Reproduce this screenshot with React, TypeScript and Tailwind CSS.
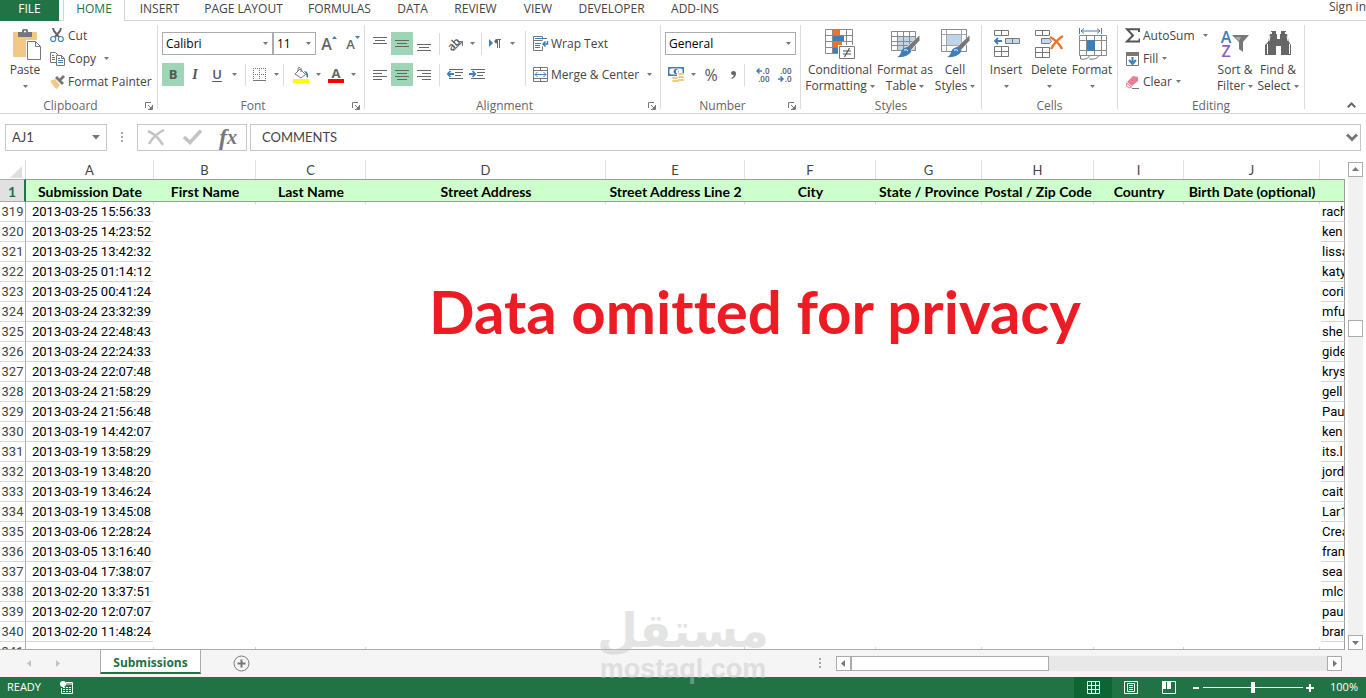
import type { ReactNode } from "react";
import clsx from "clsx";

const tabs = [
  { label: "INSERT", width: "w-[65px]" },
  { label: "PAGE LAYOUT", width: "w-[103px]" },
  { label: "FORMULAS", width: "w-[89px]" },
  { label: "DATA", width: "w-[57px]" },
  { label: "REVIEW", width: "w-[69px]" },
  { label: "VIEW", width: "w-[56px]" },
  { label: "DEVELOPER", width: "w-[91px]" },
  { label: "ADD-INS", width: "w-[76px]" },
];

const columns = [
  { letter: "A", title: "Submission Date", width: "w-[128px]" },
  { letter: "B", title: "First Name", width: "w-[102px]" },
  { letter: "C", title: "Last Name", width: "w-[110px]" },
  { letter: "D", title: "Street Address", width: "w-[240px]" },
  { letter: "E", title: "Street Address Line 2", width: "w-[139px]" },
  { letter: "F", title: "City", width: "w-[131px]" },
  { letter: "G", title: "State / Province", width: "w-[106px]" },
  { letter: "H", title: "Postal / Zip Code", width: "w-[112px]" },
  { letter: "I", title: "Country", width: "w-[90px]" },
  { letter: "J", title: "Birth Date (optional)", width: "w-[136px]" },
];

const rows = [
  ["319", "2013-03-25 15:56:33", "rach"],
  ["320", "2013-03-25 14:23:52", "ken"],
  ["321", "2013-03-25 13:42:32", "lissa"],
  ["322", "2013-03-25 01:14:12", "katy"],
  ["323", "2013-03-25 00:41:24", "cori"],
  ["324", "2013-03-24 23:32:39", "mfu"],
  ["325", "2013-03-24 22:48:43", "she"],
  ["326", "2013-03-24 22:24:33", "gide"],
  ["327", "2013-03-24 22:07:48", "krys"],
  ["328", "2013-03-24 21:58:29", "gell"],
  ["329", "2013-03-24 21:56:48", "Pau"],
  ["330", "2013-03-19 14:42:07", "ken"],
  ["331", "2013-03-19 13:58:29", "its.l"],
  ["332", "2013-03-19 13:48:20", "jord"],
  ["333", "2013-03-19 13:46:24", "cait"],
  ["334", "2013-03-19 13:45:08", "Lar1"],
  ["335", "2013-03-06 12:28:24", "Crea"],
  ["336", "2013-03-05 13:16:40", "fran"],
  ["337", "2013-03-04 17:38:07", "sea"],
  ["338", "2013-02-20 13:37:51", "mlc"],
  ["339", "2013-02-20 12:07:07", "pau"],
  ["340", "2013-02-20 11:48:24", "bran"],
  ["341", "", ""],
];

/* ---------- small shared pieces ---------- */

function Caret({ className }: { className?: string }) {
  return (
    <svg width="5" height="3" viewBox="0 0 5 3" className={clsx("shrink-0 fill-[#777]", className)} aria-hidden>
      <path d="M0 0h5L2.5 3z" />
    </svg>
  );
}

function CaretButton({ label }: { label: string }) {
  return (
    <button type="button" aria-label={label} className="flex h-[23px] w-[13px] shrink-0 items-center justify-center">
      <Caret />
    </button>
  );
}

function Divider({ className }: { className?: string }) {
  return <span className={clsx("w-px shrink-0 bg-[#dcdcdc]", className)} />;
}

function Group({
  title,
  width,
  launcher,
  children,
}: {
  title: string;
  width: string;
  launcher?: boolean;
  children: ReactNode;
}) {
  return (
    <section aria-label={title} className={clsx("flex shrink-0", width)}>
      <div className="flex min-w-0 flex-1 flex-col">
        <div className="flex flex-1">{children}</div>
        <div className="flex h-[15px] items-center">
          <span className="flex-1 text-center leading-[15px] text-[#666]">{title}</span>
          {launcher && (
            <button type="button" aria-label={`${title} settings`} className="flex w-4 items-center justify-center">
              <svg width="8" height="8" viewBox="0 0 8 8" fill="none" stroke="#777" aria-hidden>
                <path d="M.5 6V.5H6M3 3l3 3M7.5 3v4.5H3" />
                <path d="M7 4v3H4z" fill="#777" stroke="none" />
              </svg>
            </button>
          )}
        </div>
      </div>
      <Divider className="my-1" />
    </section>
  );
}

function SmallButton({ icon, label, caret }: { icon: ReactNode; label: string; caret?: string }) {
  return (
    <button type="button" className="flex h-[23px] items-center whitespace-nowrap">
      <span className="flex w-[18px] shrink-0 items-center justify-start">{icon}</span>
      {label}
      {caret && <Caret className={caret} />}
    </button>
  );
}

function BigButton({
  icon,
  lines,
  width,
}: {
  icon: ReactNode;
  lines: string[];
  width: string;
}) {
  return (
    <button type="button" className={clsx("flex shrink-0 flex-col items-center pt-1", width)}>
      <span className="flex h-[37px] items-center">{icon}</span>
      <span className="leading-4 whitespace-nowrap">{lines[0]}</span>
      <span className="flex h-4 items-center gap-[3px] leading-4 whitespace-nowrap">
        {lines[1]}
        <Caret />
      </span>
    </button>
  );
}

function IconButton({
  label,
  active,
  width = "w-[22px]",
  children,
}: {
  label: string;
  active?: boolean;
  width?: string;
  children: ReactNode;
}) {
  return (
    <button
      type="button"
      aria-label={label}
      aria-pressed={active}
      className={clsx("flex h-[23px] shrink-0 items-center justify-center", width, active && "bg-[#9fd5b7]")}
    >
      {children}
    </button>
  );
}

function Picker({ label, value, width }: { label: string; value: string; width: string }) {
  return (
    <div className={clsx("flex h-[23px] items-center border border-[#ababab] bg-white pr-1", width)}>
      <select aria-label={label} className="h-full min-w-0 flex-1 appearance-none pl-[3px] text-black outline-none">
        <option>{value}</option>
      </select>
      <Caret />
    </div>
  );
}

function Lines({ d }: { d: string }) {
  return (
    <svg width="14" height="14" viewBox="0 0 14 14" fill="none" stroke="#666" aria-hidden>
      <path d={d} />
    </svg>
  );
}

/* ---------- ribbon icons ---------- */

function PasteIcon() {
  return (
    <svg width="28" height="31" viewBox="0 0 28 31" aria-hidden>
      <path d="M0 3h24v25H0z" fill="#f0c987" />
      <path d="M5 3h4V1.500q0-1.500 1.500-1.500h3Q15 0 15 1.500V3h4v5H5z" fill="#777" />
      <circle cx="12" cy="2.500" r="1" fill="#fff" />
      <path d="M13 11h10l5 5v15H13z" fill="#fff" />
      <path d="M14.500 12.500h8l5 5v13h-13zM22.500 12.500v5h5" fill="#fff" stroke="#777" />
    </svg>
  );
}

function CutIcon() {
  return (
    <svg width="14" height="15" viewBox="0 0 14 15" fill="none" aria-hidden>
      <path d="M3 0l1 3 5 6M11 0l-1 3-5 6" stroke="#666" strokeWidth="2" />
      <circle cx="3.200" cy="11" r="2.500" stroke="#3f7fb9" strokeWidth="1.200" />
      <circle cx="10.800" cy="11" r="2.500" stroke="#3f7fb9" strokeWidth="1.200" />
    </svg>
  );
}

function CopyIcon() {
  return (
    <svg width="15" height="14" viewBox="0 0 15 14" fill="none" aria-hidden>
      <path d="M.5.5h5l2 2v8h-7z" stroke="#777" fill="#fff" />
      <path d="M2 3.500h2M2 5.500h3M2 7.500h3" stroke="#3f7fb9" />
      <path d="M6.500 3.500h5l3 3v7h-8z" stroke="#777" fill="#fff" />
      <path d="M11.500 3.500v3h3" stroke="#777" />
      <path d="M8 6.500h2M8 8.500h5M8 10.500h5" stroke="#3f7fb9" />
    </svg>
  );
}

function PainterIcon() {
  return (
    <svg width="16" height="14" viewBox="0 0 16 14" aria-hidden>
      <path d="M0 6l5-2 5 6-3 4-2-1z" fill="#f0c987" />
      <path d="M5 3l2-2 7 7-2 2z" fill="#777" />
      <path d="M9 4l4-4 2 2-4 4z" fill="#777" />
    </svg>
  );
}

function BordersIcon() {
  return (
    <svg width="13" height="13" viewBox="0 0 13 13" fill="none" stroke="#777" aria-hidden>
      <path d="M0 .5h13M0 6.500h13M.5 0v12M6.500 0v12M12.500 0v12" strokeDasharray="1 1" />
      <path d="M0 12.500h13" />
    </svg>
  );
}

function FillColorIcon() {
  return (
    <svg width="16" height="16" viewBox="0 0 16 16" fill="none" aria-hidden>
      <path d="M2 7l5-5 5.500 5.500L8 11z" fill="#fff" stroke="#777" />
      <path d="M5 4V2q0-2 2-1.500T8 5" stroke="#777" />
      <path d="M11 4q5 0 4 7-2-1-2-4z" fill="#3f7fb9" />
      <path d="M0 12h16v4H0z" fill="#ff0" />
    </svg>
  );
}

function FontColorIcon() {
  return (
    <span className="flex w-4 flex-col items-center border-b-4 border-[#ff0000] text-[13px] leading-3 font-bold text-[#666]">
      A
    </span>
  );
}

function OrientationIcon() {
  return (
    <span className="flex items-center">
      <span className="-rotate-45 text-[11px] leading-3 font-semibold text-[#555]">ab</span>
      <svg width="10" height="14" viewBox="0 0 10 14" fill="none" className="-ml-2" aria-hidden>
        <path d="M0 14L9 5M4.500 4.500H9.500V9" stroke="#777" strokeWidth="1.200" />
      </svg>
    </span>
  );
}

function DirectionIcon() {
  return (
    <svg width="13" height="11" viewBox="0 0 13 11" aria-hidden>
      <path d="M0 1l4 4-4 4z" fill="#3f7fb9" />
      <path d="M7.500 1.500H12M8.500 1v9M10.500 1v9" stroke="#666" fill="none" />
      <path d="M8.500 1Q5.500 1 5.500 3.200T8.500 5.500z" fill="#666" />
    </svg>
  );
}

function IndentIcon({ out }: { out?: boolean }) {
  return (
    <svg width="16" height="11" viewBox="0 0 16 11" fill="none" aria-hidden>
      <path d="M2 .5h14M8 3.500h8M8 6.500h6M2 9.500h14" stroke="#666" />
      {out ? (
        <path d="M7 5H1M3.500 2L.7 5l2.800 3" stroke="#3f7fb9" strokeWidth="1.800" />
      ) : (
        <path d="M0 5h6M3.500 2l2.800 3-2.800 3" stroke="#3f7fb9" strokeWidth="1.800" />
      )}
    </svg>
  );
}

function WrapIcon() {
  return (
    <svg width="16" height="16" viewBox="0 0 16 16" fill="none" aria-hidden>
      <path d="M9.500 3.500V.5h-9v14h9v-4M.5 4.500h9" stroke="#777" />
      <path d="M2 2.500h12M2 7.500h6M2 9.500h5M2 11.500h5" stroke="#3f7fb9" />
      <path d="M14.500 5v3h-4M12.500 5.500L10 8l2.500 2.500" stroke="#3f7fb9" strokeWidth="1.500" />
    </svg>
  );
}

function MergeIcon() {
  return (
    <svg width="15" height="15" viewBox="0 0 15 15" fill="none" aria-hidden>
      <path d="M.5.5h14v14H.5zM.5 3.500h14M.5 11.500h14M7.500.5v3M7.500 11.500v3" stroke="#777" />
      <path d="M2 7.500h11M4.500 5L2 7.500 4.500 10M10.500 5L13 7.500 10.500 10" stroke="#3f7fb9" />
    </svg>
  );
}

function MoneyIcon() {
  return (
    <svg width="17" height="16" viewBox="0 0 17 16" aria-hidden>
      <path d="M0 0h16v9H0z" fill="#3f7fb9" />
      <path d="M1.500 2.500v4l1.500 1h10l1.500-1v-4l-1.500-1H3z" fill="#fff" />
      <circle cx="8" cy="4.500" r="2.500" fill="#3f7fb9" />
      <path d="M8 3h2v3H8z" fill="#fff" />
      <path d="M9 6h7v8H9zM4 10h7v6H4z" fill="#fff" />
      <g fill="#f0c987">
        <rect x="10" y="6" width="6" height="2" rx="1" />
        <rect x="10" y="9" width="6" height="2" rx="1" />
        <rect x="10" y="12" width="6" height="2" rx="1" />
        <rect x="4" y="10" width="6" height="2" rx="1" />
        <rect x="4" y="13" width="7" height="2" rx="1" />
      </g>
    </svg>
  );
}

function DecimalIcon({ more }: { more?: boolean }) {
  return (
    <span className="flex w-[15px] flex-col items-end text-[8px] leading-[8px] font-semibold text-[#555]">
      <span className="flex items-center">
        {more && (
          <svg width="7" height="6" viewBox="0 0 7 6" fill="none" stroke="#3f7fb9" strokeWidth="1.500" aria-hidden>
            <path d="M6 3H1M3.500.5L1 3l2.500 2.500" />
          </svg>
        )}
        {more ? ".0" : ".00"}
      </span>
      <span className="flex items-center">
        {!more && (
          <svg width="7" height="6" viewBox="0 0 7 6" fill="none" stroke="#3f7fb9" strokeWidth="1.500" aria-hidden>
            <path d="M0 3h5M2.500.5L5 3 2.500 5.500" />
          </svg>
        )}
        {more ? ".00" : ".0"}
      </span>
    </span>
  );
}

function ConditionalIcon() {
  return (
    <svg width="30" height="30" viewBox="0 0 30 30" fill="none" aria-hidden>
      <path d="M.5.5h27v24H.5zM.5 6.500h27M.5 12.500h27M.5 18.500h27M7.500.5v24M14.500.5v24M21.500.5v24" stroke="#8a8a8a" fill="#fff" />
      <path d="M8 1h6v5H8zM8 13h9v5H8z" fill="#ee7326" />
      <path d="M8 7h11v5H8zM8 19h5v5H8z" fill="#3f7fb9" />
      <path d="M13 16h17v14H13z" fill="#fff" />
      <path d="M14.500 17.500h15v12h-15z" stroke="#777" fill="#fff" />
      <path d="M18 22h8M18 25h8M24.500 19l-5 9" stroke="#555" strokeWidth="1.200" />
    </svg>
  );
}

function Brush() {
  return (
    <>
      <path d="M30 6v6L19 24l-5-4z" fill="#fff" />
      <path d="M29.500 6.500v5L20 22l-4-3z" fill="#777" />
      <path d="M17 18q4 1 4 5-4 6-14 5 3-1 4-5t6-5z" fill="#3f7fb9" />
      <path d="M14 21q3-1 4 1" stroke="#fff" />
    </>
  );
}

function FormatTableIcon() {
  return (
    <svg width="30" height="30" viewBox="0 0 30 30" fill="none" aria-hidden>
      <path d="M1.500 2.500h24v19h-24z" stroke="#8a8a8a" fill="#fff" />
      <path d="M8 8h17v13H8z" fill="#bfd4e8" />
      <path d="M1.500 7.500h24M1.500 12.500h24M1.500 16.500h24M7.500 2.500v19M13.500 2.500v19M19.500 2.500v19" stroke="#8a8a8a" />
      <Brush />
    </svg>
  );
}

function CellStylesIcon() {
  return (
    <svg width="30" height="30" viewBox="0 0 30 30" fill="none" aria-hidden>
      <path d="M1.500.5h25v22h-25z" stroke="#8a8a8a" fill="#fff" />
      <path d="M1.500 5.500h25M1.500 16.500h25M6.500.5v22M21.500.5v22" stroke="#a5a5a5" />
      <path d="M7 6h14v10H7z" fill="#bfd4e8" />
      <Brush />
    </svg>
  );
}

function InsertIcon() {
  return (
    <svg width="27" height="30" viewBox="0 0 27 30" fill="none" stroke="#777" aria-hidden>
      <path d="M1.500 1.500h14v5h-14zM8.500 1.500v5M1.500 17.500h14v10h-14zM8.500 17.500v10M1.500 22.500h14" />
      <path d="M12.500 9.500h14v5h-14zM19.500 9.500v5" fill="#c5d9ec" />
      <path d="M9 12H2M5 9l-3 3 3 3" stroke="#3f7fb9" strokeWidth="1.800" />
    </svg>
  );
}

function DeleteIcon() {
  return (
    <svg width="30" height="30" viewBox="0 0 30 30" fill="none" stroke="#777" aria-hidden>
      <path d="M1.500 1.500h14v5h-14zM8.500 1.500v5M1.500 18.500h14v10h-14zM8.500 18.500v10M1.500 23.500h14" />
      <path d="M7.500 9.500h8l2 3-2 2h-8z" fill="#c5d9ec" />
      <path d="M16 8q8 4 12 12M29 7q-7 4-12 13" stroke="#ee7326" strokeWidth="2.500" />
    </svg>
  );
}

function FormatIcon() {
  return (
    <svg width="29" height="32" viewBox="0 0 29 32" fill="none" stroke="#8a8a8a" aria-hidden>
      <path d="M1.500 0v6M23.500 0v6M3 3h19M6 .5L3 3l3 2.500M19 .5L22 3l-3 2.500" stroke="#3f7fb9" />
      <path d="M1.500 7.500h27v20h-27zM1.500 12.500h27M1.500 22.500h27M8.500 7.500v20M16.500 7.500v20M23.500 7.500v20" fill="#fff" />
      <path d="M9 12h8v11H9z" fill="#3f7fb9" stroke="none" />
      <path d="M2.500 28v3q7 1 9-3M11.500 31q7 1 9-3" stroke="#777" />
    </svg>
  );
}

function SigmaIcon() {
  return (
    <svg width="15" height="15" viewBox="0 0 15 15" fill="none" aria-hidden>
      <path d="M14 4V1.200H2L8 7.500 2 13.500h12.500v-3" stroke="#555" strokeWidth="2" />
    </svg>
  );
}

function FillIcon() {
  return (
    <svg width="15" height="16" viewBox="0 0 15 16" fill="none" aria-hidden>
      <path d="M1.500 1.500h12v13h-12z" stroke="#777" fill="#fff" />
      <path d="M1 1h13v4H1z" fill="#777" />
      <path d="M7.500 6v7M4 9l3.500 4L11 9" stroke="#3f7fb9" strokeWidth="2" />
    </svg>
  );
}

function EraserIcon() {
  return (
    <svg width="15" height="14" viewBox="0 0 15 14" fill="none" aria-hidden>
      <path d="M8 1l5 1v4l-6 5-5-4z" fill="#ec7d95" />
      <path d="M1.500 8l5 4-2 1-3-2z" fill="#fff" stroke="#ec7d95" />
      <path d="M7 13.500h7" stroke="#777" />
    </svg>
  );
}

function SortIcon() {
  return (
    <span className="flex items-center gap-px">
      <span className="flex flex-col text-base leading-[14px] font-semibold">
        <span className="text-[#3f7fb9]">A</span>
        <span className="text-[#8b5fb5]">Z</span>
      </span>
      <svg width="17" height="17" viewBox="0 0 17 17" aria-hidden>
        <path d="M0 0h17l-6 7v10l-4-3V7z" fill="#777" />
        <path d="M3 2h6L7 6z" fill="#aaa" />
      </svg>
    </span>
  );
}

function FindIcon() {
  return (
    <svg width="27" height="25" viewBox="0 0 27 25" fill="#666" aria-hidden>
      <path d="M6 0h5v3h1v5h3V3h1V0h5v3h1l2 8 2 3v10H16v-9h-5v9H0V14l3-3 2-8h1z" />
      <path d="M6.500 3v-2M20.500 3v-2M2.500 13v10M24.500 13v10M5 5L4 10M22 5l1 5" stroke="#fff" />
    </svg>
  );
}

/* ---------- page sections ---------- */

function TabStrip() {
  return (
    <nav aria-label="Ribbon tabs" className="flex h-[21px] shrink-0 items-stretch leading-[17px]">
      <button type="button" className="w-[59px] bg-[#217346] pb-1 text-white">
        FILE
      </button>
      <span className="w-1 border-b border-[#d4d4d4]" />
      <button type="button" className="w-[62px] border-x border-[#d4d4d4] pb-1 text-[#217346]">
        HOME
      </button>
      <div className="flex flex-1 border-b border-[#d4d4d4] pl-0.5">
        {tabs.map(({ label, width }) => (
          <button key={label} type="button" className={clsx("shrink-0 pb-[3px] whitespace-nowrap", width)}>
            {label}
          </button>
        ))}
        <a href="#sign-in" className="ml-auto pb-[7px] leading-[13px] whitespace-nowrap">
          Sign in
        </a>
      </div>
    </nav>
  );
}

function Ribbon() {
  return (
    <div className="flex h-[93px] shrink-0 border-b border-[#d4d4d4]">
      <Group title="Clipboard" width="w-[158px]" launcher>
        <button type="button" className="flex w-[50px] shrink-0 flex-col items-center pt-2">
          <span className="flex h-[33px] items-start pl-1">
            <PasteIcon />
          </span>
          <span className="leading-4">Paste</span>
          <span className="flex h-4 items-center">
            <Caret />
          </span>
        </button>
        <div className="flex flex-col items-start pt-[3px]">
          <SmallButton icon={<CutIcon />} label="Cut" />
          <SmallButton icon={<CopyIcon />} label="Copy" caret="ml-2" />
          <SmallButton icon={<PainterIcon />} label="Format Painter" />
        </div>
      </Group>

      <Group title="Font" width="w-[207px]" launcher>
        <div className="flex flex-col gap-2 pt-[11px] pl-1">
          <div className="flex items-center">
            <Picker label="Font family" value="Calibri" width="w-[111px]" />
            <Picker label="Font size" value="11" width="w-[43px]" />
            <IconButton label="Increase font size" width="w-[26px]">
              <span className="text-base leading-4 font-semibold text-[#666]">A</span>
              <svg width="5" height="15" viewBox="0 0 5 15" fill="#3f7fb9" aria-hidden>
                <path d="M0 3h5L2.500 0z" />
              </svg>
            </IconButton>
            <IconButton label="Decrease font size" width="w-[22px]">
              <span className="text-[13px] leading-4 font-semibold text-[#666]">A</span>
              <svg width="5" height="15" viewBox="0 0 5 15" fill="#3f7fb9" aria-hidden>
                <path d="M0 0h5L2.500 3z" />
              </svg>
            </IconButton>
          </div>
          <div className="flex items-center">
            <IconButton label="Bold" active>
              <b className="text-[13px] text-[#555]">B</b>
            </IconButton>
            <IconButton label="Italic">
              <i className="font-['Liberation_Serif'] text-sm font-bold text-[#555]">I</i>
            </IconButton>
            <IconButton label="Underline">
              <u className="text-[13px] font-semibold text-[#555] underline-offset-2">U</u>
            </IconButton>
            <CaretButton label="Underline style" />
            <Divider className="mr-0.5 ml-1 h-[22px]" />
            <IconButton label="Borders">
              <BordersIcon />
            </IconButton>
            <CaretButton label="Border style" />
            <Divider className="mr-1.5 h-[22px]" />
            <IconButton label="Fill color">
              <FillColorIcon />
            </IconButton>
            <CaretButton label="Fill color list" />
            <IconButton label="Font color">
              <FontColorIcon />
            </IconButton>
            <CaretButton label="Font color list" />
          </div>
        </div>
      </Group>

      <Group title="Alignment" width="w-[296px]" launcher>
        <div className="flex flex-col gap-2 pt-[11px] pl-1">
          <div className="flex items-center">
            <IconButton label="Top align">
              <Lines d="M0 .5h14M2 3.500h10M0 6.500h14" />
            </IconButton>
            <IconButton label="Middle align" active>
              <Lines d="M0 3.500h14M2 6.500h10M0 9.500h14" />
            </IconButton>
            <IconButton label="Bottom align">
              <Lines d="M0 7.500h14M2 10.500h10M0 13.500h14" />
            </IconButton>
            <Divider className="mx-1 h-[22px]" />
            <IconButton label="Orientation">
              <OrientationIcon />
            </IconButton>
            <CaretButton label="Orientation list" />
            <Divider className="mx-0.5 h-[22px]" />
            <IconButton label="Text direction">
              <DirectionIcon />
            </IconButton>
            <CaretButton label="Text direction list" />
          </div>
          <div className="flex items-center">
            <IconButton label="Align left">
              <Lines d="M0 2.500h14M0 5.500h9M0 8.500h14M0 11.500h9" />
            </IconButton>
            <IconButton label="Align center" active>
              <Lines d="M0 2.500h14M2 5.500h10M0 8.500h14M2 11.500h10" />
            </IconButton>
            <IconButton label="Align right">
              <Lines d="M0 2.500h14M5 5.500h9M0 8.500h14M5 11.500h9" />
            </IconButton>
            <Divider className="mx-1 h-[22px]" />
            <IconButton label="Decrease indent">
              <IndentIcon out />
            </IconButton>
            <IconButton label="Increase indent">
              <IndentIcon />
            </IconButton>
          </div>
        </div>
        <Divider className="mt-[10px] mr-[7px] ml-1.5 h-[55px]" />
        <div className="flex flex-col items-start gap-2 pt-[11px]">
          <SmallButton icon={<WrapIcon />} label="Wrap Text" />
          <SmallButton icon={<MergeIcon />} label="Merge & Center" caret="ml-2" />
        </div>
      </Group>

      <Group title="Number" width="w-[140px]" launcher>
        <div className="flex flex-col gap-2 pt-[11px] pl-1">
          <Picker label="Number format" value="General" width="w-[131px]" />
          <div className="flex items-center">
            <IconButton label="Accounting format">
              <MoneyIcon />
            </IconButton>
            <CaretButton label="Accounting format list" />
            <IconButton label="Percent style">
              <span className="text-base text-[#555]">%</span>
            </IconButton>
            <IconButton label="Comma style">
              <svg width="5" height="8" viewBox="0 0 5 8" fill="#666" aria-hidden>
                <path d="M0 2q0-2 2.500-2T5 2.500Q5 6 1 8L.5 7Q3 5.500 2.800 4 0 4.500 0 2z" />
              </svg>
            </IconButton>
            <Divider className="mr-1.5 h-[22px]" />
            <IconButton label="Increase decimal">
              <DecimalIcon more />
            </IconButton>
            <IconButton label="Decrease decimal">
              <DecimalIcon />
            </IconButton>
          </div>
        </div>
      </Group>

      <Group title="Styles" width="w-[181px]">
        <BigButton icon={<ConditionalIcon />} lines={["Conditional", "Formatting"]} width="w-[78px]" />
        <BigButton icon={<FormatTableIcon />} lines={["Format as", "Table"]} width="w-[52px]" />
        <BigButton icon={<CellStylesIcon />} lines={["Cell", "Styles"]} width="w-[48px]" />
      </Group>

      <Group title="Cells" width="w-[136px]">
        <BigButton icon={<InsertIcon />} lines={["Insert", ""]} width="w-[48px]" />
        <BigButton icon={<DeleteIcon />} lines={["Delete", ""]} width="w-[38px]" />
        <BigButton icon={<FormatIcon />} lines={["Format", ""]} width="w-[48px]" />
      </Group>

      <Group title="Editing" width="w-[187px]">
        <div className="flex w-[94px] shrink-0 flex-col items-start pt-[3px] pl-[7px]">
          <SmallButton icon={<SigmaIcon />} label="AutoSum" caret="ml-2" />
          <SmallButton icon={<FillIcon />} label="Fill" caret="ml-1" />
          <SmallButton icon={<EraserIcon />} label="Clear" caret="ml-1" />
        </div>
        <BigButton icon={<SortIcon />} lines={["Sort &", "Filter"]} width="w-[46px]" />
        <BigButton icon={<FindIcon />} lines={["Find &", "Select"]} width="w-[40px]" />
      </Group>

      <button type="button" aria-label="Collapse the ribbon" className="mt-auto mr-[10px] ml-auto pb-[5px]">
        <svg width="9" height="6" viewBox="0 0 9 6" fill="none" stroke="#666" strokeWidth="2" aria-hidden>
          <path d="M.7 5.300L4.500 1.500l3.800 3.800" />
        </svg>
      </button>
    </div>
  );
}

function Dots() {
  return (
    <svg width="2" height="11" viewBox="0 0 2 11" fill="#a6a6a6" aria-hidden>
      <path d="M0 0h2v2H0zM0 4h2v2H0zM0 8h2v2H0z" />
    </svg>
  );
}

function FormulaBar() {
  return (
    <div className="flex h-[46px] shrink-0 items-center px-[5px] font-['Lato',sans-serif] text-[13px]">
      <div className="flex h-[27px] w-[102px] items-center border border-[#c6c6c6] pr-[6px]">
        <input aria-label="Name box" defaultValue="AJ1" className="min-w-0 flex-1 pt-0.5 pl-[6px] outline-none" />
        <svg width="8" height="5" viewBox="0 0 8 5" fill="#777" aria-hidden>
          <path d="M0 0h8L4 4.500z" />
        </svg>
      </div>
      <div className="flex w-[30px] justify-center">
        <Dots />
      </div>
      <div className="flex h-[27px] w-[110px] items-center border border-[#c6c6c6]">
        <button type="button" aria-label="Cancel" className="flex w-9 justify-center">
          <svg width="18" height="17" viewBox="0 0 18 17" fill="none" stroke="#c3c3c3" strokeWidth="2.500" aria-hidden>
            <path d="M1 2q9 4 15 14M17 1Q7 6 2 15" />
          </svg>
        </button>
        <button type="button" aria-label="Enter" className="flex w-9 justify-center">
          <svg width="19" height="16" viewBox="0 0 19 16" fill="none" stroke="#c3c3c3" strokeWidth="3.500" aria-hidden>
            <path d="M1 8l6 5.500L18 1.500" />
          </svg>
        </button>
        <button
          type="button"
          aria-label="Insert function"
          className="flex w-9 items-center justify-center font-['Liberation_Serif',serif] leading-6 font-bold text-[#777] italic"
        >
          <span className="text-2xl leading-6">f</span>
          <span className="text-xl leading-6">x</span>
        </button>
      </div>
      <div className="ml-[3px] flex h-[27px] flex-1 items-center border border-[#c6c6c6] pr-[2px]">
        <input aria-label="Formula" defaultValue="COMMENTS" className="min-w-0 flex-1 pt-0.5 pl-[11px] outline-none" />
        <svg width="12" height="9" viewBox="0 0 12 9" fill="none" stroke="#777" strokeWidth="3" aria-hidden>
          <path d="M1 1.500l5 5 5-5" />
        </svg>
      </div>
    </div>
  );
}

function Sheet() {
  return (
    <div className="relative min-w-0 flex-1 overflow-hidden border-b border-[#ababab]">
      <table className="w-full table-fixed border-separate border-spacing-0 font-['Lato',sans-serif] text-[13px] text-black">
        <colgroup>
          <col className="w-[26px]" />
          {columns.map(({ letter, width }) => (
            <col key={letter} className={width} />
          ))}
          <col />
        </colgroup>
        <thead>
          <tr className="h-[19px] text-[#444]">
            <th aria-label="Select all" className="border-r border-[#d9d9d9] p-0">
              <svg width="12" height="12" viewBox="0 0 12 12" fill="#dfdfdf" className="mt-1 ml-[10px]" aria-hidden>
                <path d="M12 0v12H0z" />
              </svg>
            </th>
            {columns.map(({ letter }) => (
              <th key={letter} className="border-r border-[#e1e1e1] p-0 leading-[18px] font-normal">
                {letter}
              </th>
            ))}
            <th className="p-0" />
          </tr>
          <tr className="h-[23px] text-sm leading-[19px]">
            <th className="border-y border-r-2 border-y-[#ababab] border-r-[#217346] bg-[#e1e1e1] p-0 pt-0.5 text-[#217346]">
              1
            </th>
            {columns.map(({ letter, title }) => (
              <th key={letter} className="border-y border-[#9b9b9b] bg-[#ccffcc] p-0 pt-0.5 whitespace-nowrap">
                {title}
              </th>
            ))}
            <th className="border-y border-r border-[#9b9b9b] bg-[#ccffcc] p-0" />
          </tr>
        </thead>
        <tbody className="font-['Roboto',sans-serif] leading-[18px]">
          {rows.map(([n, date, email]) => (
            <tr key={n} className="h-5">
              <th className="border-r border-b border-r-[#ababab] border-b-[#d9d9d9] p-0 pt-px font-normal text-[#444]">{n}</th>
              {columns.map(({ letter }) => (
                <td key={letter} className="border-r border-b border-[#d4d4d4] p-0 pt-px pr-0.5 text-right whitespace-nowrap">
                  {letter === "A" && date}
                </td>
              ))}
              <td className="overflow-hidden border-r border-b border-r-[#9b9b9b] border-b-[#d4d4d4] p-0 pt-px pl-[2px]">
                {email}
              </td>
            </tr>
          ))}
        </tbody>
      </table>

      {/* block covering the private columns */}
      <div className="absolute top-11 right-6 bottom-[2px] left-[153px] flex justify-center bg-white">
        <p className="mt-[67px] mr-[-36px] h-[80px] font-['Lato',sans-serif] text-[60px] leading-[80px] font-bold whitespace-nowrap text-[#ed1c24] [font-variant-ligatures:none]">
          Data omitted for privacy
        </p>
      </div>
    </div>
  );
}

function ScrollButton({ label, d }: { label: string; d: string }) {
  return (
    <button
      type="button"
      aria-label={label}
      className="flex h-[15px] w-[15px] shrink-0 items-center justify-center border border-[#ababab] bg-white"
    >
      <svg width="7" height="7" viewBox="0 0 7 7" fill="#777" aria-hidden>
        <path d={d} />
      </svg>
    </button>
  );
}

function VerticalScroll() {
  return (
    <div className="flex w-[21px] shrink-0 flex-col pt-[2px] pl-[3px]">
      <ScrollButton label="Scroll up" d="M0 5h7L3.500 1z" />
      <div className="flex w-[15px] flex-1 flex-col bg-[#f1f1f1]">
        <span className="flex-[143]" />
        <span className="h-[17px] border border-[#ababab] bg-white" />
        <span className="flex-[297]" />
      </div>
      <ScrollButton label="Scroll down" d="M0 2h7L3.500 6z" />
    </div>
  );
}

function SheetTabs() {
  return (
    <div className="flex h-[27px] shrink-0 bg-[#f5f5f5]">
      <div className="flex w-[100px] items-center gap-[25px] pl-[27px]">
        <button type="button" aria-label="Previous sheet">
          <svg width="4" height="7" viewBox="0 0 4 7" fill="#c3c3c3" aria-hidden>
            <path d="M4 0v7L0 3.500z" />
          </svg>
        </button>
        <button type="button" aria-label="Next sheet">
          <svg width="4" height="7" viewBox="0 0 4 7" fill="#c3c3c3" aria-hidden>
            <path d="M0 0v7l4-3.500z" />
          </svg>
        </button>
      </div>
      <button
        type="button"
        className="mb-[3px] w-[101px] border-x border-b-2 border-x-[#ababab] border-b-[#217346] bg-white pt-[3px] font-['Open_Sans',sans-serif] text-xs font-bold text-[#217346]"
      >
        Submissions
      </button>
      <button type="button" aria-label="New sheet" className="ml-8">
        <svg width="17" height="17" viewBox="0 0 17 17" fill="none" stroke="#777" aria-hidden>
          <circle cx="8.500" cy="8.500" r="7.500" />
          <path d="M8.500 4.500v8M4.500 8.500h8" strokeWidth="2" />
        </svg>
      </button>
      <div className="ml-auto flex w-[547px] items-center">
        <div className="mr-[15px]">
          <Dots />
        </div>
        <ScrollButton label="Scroll left" d="M5 0v7L1 3.500z" />
        <div className="flex h-[15px] flex-1 bg-[#e8e8e8]">
          <span className="w-[198px] border border-[#ababab] bg-white" />
        </div>
        <ScrollButton label="Scroll right" d="M2 0v7l4-3.500z" />
        <span className="w-6" />
      </div>
    </div>
  );
}

function StatusBar() {
  return (
    <footer className="flex h-[21px] shrink-0 items-center bg-[#217346] text-[11px] text-white">
      <span className="w-[60px] pl-[7px]">READY</span>
      <button type="button" aria-label="Record macro">
        <svg width="13" height="13" viewBox="0 0 13 13" fill="none" stroke="#fff" aria-hidden>
          <path d="M6 1.500h6.500v11H1.500V7M6 3h6" />
          <path d="M3 6.500h2M6 6.500h2M9 6.500h2M3 8.500h2M6 8.500h2M9 8.500h2M3 10.500h2M6 10.500h2M9 10.500h2" />
          <circle cx="3" cy="3" r="3" fill="#fff" stroke="none" />
        </svg>
      </button>
      <div className="ml-auto flex items-center">
        <button
          type="button"
          aria-label="Normal view"
          aria-pressed
          className="flex h-[21px] w-[38px] items-center justify-center bg-[#0d6533]"
        >
          <svg width="13" height="13" viewBox="0 0 13 13" fill="none" stroke="#fff" aria-hidden>
            <path d="M.5.5h12v12H.5zM.5 4.500h12M.5 8.500h12M4.500.5v12M8.500.5v12" />
          </svg>
        </button>
        <button type="button" aria-label="Page layout view" className="flex w-[38px] justify-center">
          <svg width="14" height="13" viewBox="0 0 14 13" fill="none" stroke="#fff" aria-hidden>
            <path d="M.5.5h13v12H.5zM3.500 2.500h7v8h-7zM5 4.500h4M5 6.500h4M5 8.500h4" />
          </svg>
        </button>
        <button type="button" aria-label="Page break view" className="flex w-[38px] justify-center">
          <svg width="14" height="13" viewBox="0 0 14 13" fill="none" stroke="#fff" aria-hidden>
            <path d="M.5.5h13v12H.5z" />
            <path d="M0 0h4v8H0zM5 0h4v8H5z" fill="#fff" stroke="none" />
          </svg>
        </button>
        <button type="button" aria-label="Zoom out" className="ml-[5px]">
          <svg width="7" height="9" viewBox="0 0 7 9" fill="#fff" aria-hidden>
            <path d="M0 4h6v2H0z" />
          </svg>
        </button>
        <input
          type="range"
          aria-label="Zoom"
          min={0}
          max={200}
          defaultValue={100}
          className="mx-[3px] h-3 w-[100px] appearance-none bg-[linear-gradient(#fff,#fff)] bg-[length:100%_1px] bg-center bg-no-repeat [&::-webkit-slider-thumb]:h-[11px] [&::-webkit-slider-thumb]:w-1 [&::-webkit-slider-thumb]:appearance-none [&::-webkit-slider-thumb]:bg-white"
        />
        <button type="button" aria-label="Zoom in">
          <svg width="9" height="9" viewBox="0 0 9 9" fill="#fff" aria-hidden>
            <path d="M0 4h8v2H0zM3 1h2v8H3z" />
          </svg>
        </button>
        <span className="w-[51px] pr-2 text-right">100%</span>
      </div>
    </footer>
  );
}

function Watermark() {
  return (
    <div
      aria-hidden
      className="pointer-events-none absolute inset-x-0 bottom-0 flex flex-col items-center font-bold text-[#c4c4c4] opacity-45"
    >
      <span className="h-[46px] font-['DejaVu_Sans',sans-serif] text-[47px] leading-[46px]">مستقل</span>
      <span className="h-11 font-['Liberation_Sans',sans-serif] text-[27px] leading-[30px]">mostaql.com</span>
    </div>
  );
}

export default function App() {
  return (
    <div className="relative flex h-screen flex-col overflow-hidden bg-white font-['Open_Sans',sans-serif] text-xs text-[#444]">
      <TabStrip />
      <Ribbon />
      <FormulaBar />
      <main className="flex min-h-0 flex-1">
        <Sheet />
        <VerticalScroll />
      </main>
      <SheetTabs />
      <StatusBar />
      <Watermark />
    </div>
  );
}
